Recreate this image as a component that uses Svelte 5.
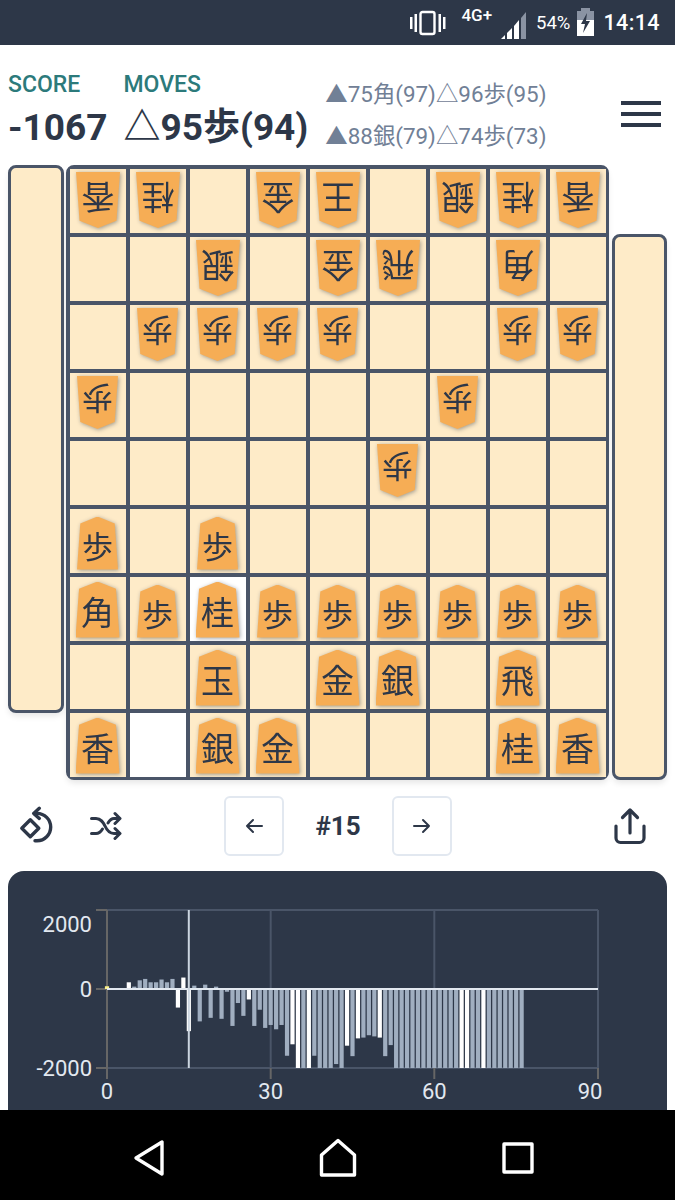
<script>
	const rows = [
		'香桂・金王・銀桂香',
		'・・銀・金飛・角・',
		'・歩歩歩歩・・歩歩',
		'歩・・・・・歩・・',
		'・・・・・歩・・・',
		'歩・歩・・・・・・',
		'角歩桂歩歩歩歩歩歩',
		'・・玉・金銀・飛・',
		'香・銀金・・・桂香'
	]
	// cells the last move came from
	const marked = ['6-2', '8-1']
	const board = rows.map((row) => row.split('').map((ch) => (ch === '・' ? '' : ch)))

	const scores = [
		70, 0, 25, 0, 170, 60, 220, 255, 170, 170, 240, 170, 255, -470, 290, -1067, 85, -820, 110, -730,
		60, -755, -70, -935, -355, -680, -265, -935, -525, -985, -911, -1020, -911, -1690, -1400, -2000,
		-2000, -2000, -1690, -2000, -2000, -2000, -1900, -2000, -1435, -1700, -1250, -1230, -1170, -1200,
		-1230, -1700, -1420, -2000, -2000, -2000, -2000, -2000, -2000, -2000, -2000, -2000, -2000, -2000,
		-2000, -2000, -2000, -2000, -2000, -2000, -2000, -2000, -2000, -2000, -2000, -2000, -2000
	]
	const whiteBars = [4, 13, 14, 15, 26, 34, 35, 37, 44, 46, 50, 65, 66, 69]

	const xAt = (i) => 107 + i * (491 / 90)
	const yAt = (v) => 989 - v * (79 / 2000)

	function barColor(i) {
		if (i === 0) return '#faf089'
		return whiteBars.includes(i) ? '#ffffff' : '#a0aec0'
	}
</script>

<div class="phone">
	<div class="status">
		<svg class="vibrate" viewBox="0 0 36 26" width="36" height="26">
			<rect x="10.5" y="2" width="14" height="22" rx="2" fill="none" stroke="#fff" stroke-width="2.4" />
			<rect x="0" y="7" width="2.5" height="12" fill="#fff" />
			<rect x="4.5" y="4" width="2.5" height="18" fill="#fff" />
			<rect x="28.5" y="4" width="2.5" height="18" fill="#fff" />
			<rect x="33" y="7" width="2.5" height="12" fill="#fff" />
		</svg>
		<span class="net">4G+</span>
		<svg class="signal" viewBox="0 0 25 27" width="25" height="27">
			<polygon points="0,27 4,23 4,27" fill="#fff" />
			<polygon points="6,21 11,16 11,27 6,27" fill="#fff" />
			<polygon points="13,14 18,8 18,27 13,27" fill="#fff" />
			<polygon points="20,6 25,0 25,27 20,27" fill="#8a93a3" />
		</svg>
		<span class="pct">54%</span>
		<svg class="battery" viewBox="0 0 17 28" width="17" height="28">
			<rect x="4" y="0" width="9" height="4" fill="#8a93a3" />
			<rect x="0" y="3" width="17" height="9" fill="#8a93a3" />
			<rect x="0" y="12" width="17" height="16" fill="#fff" />
			<polygon points="10,5 4,16 8,16 6,25 13,13 9,13" fill="#2d3748" />
		</svg>
		<span class="clock">14:14</span>
	</div>

	<main>
		<header>
			<div class="stat">
				<div class="label">SCORE</div>
				<div class="value">-1067</div>
			</div>
			<div class="stat moves">
				<div class="label">MOVES</div>
				<div class="value">△95歩(94)</div>
			</div>
			<div class="history">
				<div>▲75角(97)△96歩(95)</div>
				<div>▲88銀(79)△74歩(73)</div>
			</div>
			<div class="burger"><span></span><span></span><span></span></div>
		</header>

		<section class="table">
			<div class="stand left"></div>
			<div class="board">
				{#each board as row, r}
					{#each row as piece, c}
						<div class="cell" class:gote={r < 5} class:marked={marked.includes(r + '-' + c)}>
							{#if piece}
								<div class="shadow">
									<div class="piece" class:fu={piece === '歩'}>{piece}</div>
								</div>
							{/if}
						</div>
					{/each}
				{/each}
			</div>
			<div class="stand right"></div>
		</section>

		<section class="controls">
			<div class="tools">
				<svg class="rotate" viewBox="0 0 40 40" width="40" height="40" fill="none" stroke="#2d3748" stroke-width="3.4">
					<path d="M14.3 13.8 L22.8 22.3 L14.3 30.8 L5.8 22.3 Z" stroke-linejoin="round" />
					<path d="M19 7.4 H21 A13.7 13.7 0 0 1 21 34.8 H19" stroke-linecap="round" />
					<path d="M23.3 2.3 L17.7 7.4 L23.3 12.4" stroke-linecap="round" stroke-linejoin="round" />
				</svg>
				<svg class="shuffle" viewBox="0 0 32 30" width="32" height="30" fill="none" stroke="#2d3748" stroke-width="3" stroke-linecap="round" stroke-linejoin="round">
					<path d="M1.5 7.5 H6 C11 7.5 13 11 15 15 C17 19.5 19 22.5 24 22.5 H29" />
					<path d="M1.5 22.5 H6 C9 22.5 11 20.5 12.5 18" />
					<path d="M18 12 C19.5 9.5 21 7.5 24 7.5 H29" />
					<path d="M25 2.5 L30 7.5 L25 12.5" />
					<path d="M25 17.5 L30 22.5 L25 27.5" />
				</svg>
			</div>
			<div class="pager">
				<button aria-label="previous">
					<svg viewBox="0 0 24 24" width="24" height="24" fill="none" stroke="#2d3748" stroke-width="2" stroke-linecap="round" stroke-linejoin="round">
						<path d="M20 12 H5 M11 6 L5 12 L11 18" />
					</svg>
				</button>
				<span class="num">#15</span>
				<button aria-label="next">
					<svg viewBox="0 0 24 24" width="24" height="24" fill="none" stroke="#2d3748" stroke-width="2" stroke-linecap="round" stroke-linejoin="round">
						<path d="M4 12 H19 M13 6 L19 12 L13 18" />
					</svg>
				</button>
			</div>
			<svg class="share" viewBox="0 0 32 38" width="32" height="38" fill="none" stroke="#2d3748" stroke-width="3.2" stroke-linecap="round" stroke-linejoin="round">
				<path d="M16 26 V3 M8.5 10.5 L16 3 L23.5 10.5" />
				<path d="M2 19 V31 A4.5 4.5 0 0 0 6.5 35.5 H25.5 A4.5 4.5 0 0 0 30 31 V19" />
			</svg>
		</section>

		<section class="chart">
			<svg viewBox="8 871 659 239" width="659" height="239">
				<g stroke="#4a5568" stroke-width="2">
					<line x1="96" y1="910" x2="598" y2="910" />
					<line x1="96" y1="1068" x2="598" y2="1068" />
					<line x1="270.7" y1="910" x2="270.7" y2="1068" />
					<line x1="434.3" y1="910" x2="434.3" y2="1068" />
					<line x1="598" y1="910" x2="598" y2="1068" />
				</g>
				<g stroke="#666666" stroke-width="2">
					<line x1="107" y1="910" x2="107" y2="1079" />
					<line x1="96" y1="910" x2="107" y2="910" />
					<line x1="96" y1="989" x2="107" y2="989" />
					<line x1="96" y1="1068" x2="107" y2="1068" />
					<line x1="270.7" y1="1068" x2="270.7" y2="1079" />
					<line x1="434.3" y1="1068" x2="434.3" y2="1079" />
					<line x1="598" y1="1068" x2="598" y2="1079" />
				</g>
				{#each scores as s, i}
					<rect
						x={xAt(i) - 2.1}
						y={Math.min(yAt(s), 989)}
						width="4.2"
						height={Math.abs(yAt(s) - 989)}
						fill={barColor(i)}
					/>
				{/each}
				<line x1="107" y1="989" x2="598" y2="989" stroke="#e2e8f0" stroke-width="2" />
				<line x1="188.8" y1="910" x2="188.8" y2="1068" stroke="#cbd5e0" stroke-width="2" />
				<g class="ticks">
					<text x="92" y="932" text-anchor="end">2000</text>
					<text x="92" y="997" text-anchor="end">0</text>
					<text x="92" y="1076" text-anchor="end">-2000</text>
					<text x="107" y="1099" text-anchor="middle">0</text>
					<text x="270.7" y="1099" text-anchor="middle">30</text>
					<text x="434.3" y="1099" text-anchor="middle">60</text>
					<text x="590" y="1099" text-anchor="middle">90</text>
				</g>
			</svg>
		</section>
	</main>

	<nav>
		<svg viewBox="0 0 32 38" width="32" height="38" fill="none" stroke="#fff" stroke-width="3.4" stroke-linejoin="round">
			<path d="M29 3 V35 L3 19 Z" />
		</svg>
		<svg class="home" viewBox="0 0 38 40" width="38" height="40" fill="none" stroke="#fff" stroke-width="3.4" stroke-linejoin="round">
			<path d="M19 2.5 L35.5 17 V37 H2.5 V17 Z" />
		</svg>
		<svg viewBox="0 0 32 32" width="32" height="32" fill="none" stroke="#fff" stroke-width="3.4" stroke-linejoin="round">
			<rect x="2" y="2" width="28" height="28" />
		</svg>
	</nav>
</div>

<style>
	:global(body) {
		margin: 0;
		background: #fff;
	}

	.phone {
		display: flex;
		flex-direction: column;
		width: 675px;
		height: 1200px;
		overflow: hidden;
		font-family: Roboto, 'Noto Sans CJK JP', sans-serif;
		color: #2d3748;
	}

	.status {
		display: flex;
		flex: none;
		align-items: center;
		justify-content: flex-end;
		height: 45px;
		padding-right: 15px;
		background: #2d3748;
		color: #fff;
	}

	.vibrate {
		margin-top: 1px;
	}

	.net {
		align-self: flex-start;
		margin: 5px 0 0 15px;
		font-size: 17px;
		font-weight: 500;
	}

	.signal {
		margin: 6px 0 0 9px;
	}

	.pct {
		margin-left: 10px;
		font-size: 18.5px;
	}

	.battery {
		margin: -1px 0 0 7px;
	}

	.clock {
		margin-left: 9px;
		font-size: 21.5px;
		font-weight: 500;
		letter-spacing: 0.4px;
	}

	main {
		flex: 1;
		min-height: 0;
		overflow: hidden;
	}

	header {
		display: flex;
		height: 120px;
		padding: 0 14px 0 8px;
		box-sizing: border-box;
	}

	.stat {
		padding-top: 27px;
	}

	.moves {
		margin-left: 16px;
	}

	.label {
		color: #2c7a7b;
		font-size: 23px;
		font-weight: 500;
		line-height: 26px;
	}

	.value {
		margin-top: 8px;
		font-size: 37px;
		font-weight: 700;
		line-height: 44px;
		white-space: nowrap;
	}

	.history {
		display: flex;
		flex-direction: column;
		gap: 16px;
		margin-left: 17px;
		padding-top: 36px;
		color: #718096;
		font-size: 22.4px;
		line-height: 26px;
		white-space: nowrap;
	}

	.burger {
		display: flex;
		flex-direction: column;
		gap: 7px;
		margin-left: auto;
		padding-top: 56px;
	}

	.burger span {
		width: 40px;
		height: 4px;
		background: #2d3748;
	}

	.table {
		display: flex;
		height: 615px;
		padding-left: 8px;
	}

	.stand,
	.board {
		border: 3px solid #4a5568;
		border-radius: 8px;
		box-sizing: border-box;
		box-shadow: 0 4px 6px -1px rgba(0, 0, 0, 0.1);
	}

	.stand {
		background: #feebc8;
	}

	.left {
		width: 56px;
		height: 548px;
		margin-right: 2px;
	}

	.right {
		align-self: flex-end;
		width: 55px;
		height: 546px;
		margin-left: 3px;
	}

	.board {
		display: grid;
		grid-template-columns: repeat(9, 56px);
		grid-template-rows: repeat(9, 64px);
		gap: 4px;
		justify-content: center;
		align-content: center;
		width: 543px;
		background: #4a5568;
	}

	.cell {
		display: flex;
		align-items: flex-end;
		justify-content: center;
		padding-bottom: 3px;
		box-sizing: border-box;
		background: #feebc8;
	}

	.cell.gote {
		align-items: flex-start;
		padding: 3px 0 0;
	}

	.cell.marked {
		background: #fff;
	}

	.shadow {
		filter: drop-shadow(1px 1px 2px rgba(45, 55, 72, 0.45));
	}

	.piece {
		display: flex;
		align-items: center;
		justify-content: center;
		width: 44px;
		height: 56px;
		padding-top: 3px;
		box-sizing: border-box;
		background: #f6ad55;
		clip-path: polygon(50% 0, 92% 13%, 100% 100%, 0 100%, 8% 13%);
		font-family: 'Noto Sans CJK JP', sans-serif;
		font-size: 33px;
		line-height: 1;
		color: #2d3748;
	}

	.piece.fu {
		width: 41px;
		height: 53px;
		font-size: 31px;
	}

	.gote .piece {
		transform: rotate(180deg);
	}

	.controls {
		display: flex;
		align-items: center;
		height: 91px;
		padding: 0 29px 0 16px;
		box-sizing: border-box;
	}

	.tools {
		display: flex;
		align-items: center;
		gap: 34px;
		width: 208px;
	}

	.pager {
		display: flex;
		align-items: center;
	}

	.pager button {
		display: flex;
		align-items: center;
		justify-content: center;
		width: 60px;
		height: 60px;
		padding: 0;
		border: 2px solid #e2e8f0;
		border-radius: 6px;
		background: #fff;
	}

	.num {
		width: 108px;
		font-size: 26px;
		font-weight: 700;
		text-align: center;
	}

	.share {
		margin-left: auto;
	}

	.chart {
		width: 659px;
		height: 300px;
		margin-left: 8px;
		border-radius: 16px;
		background: #2d3748;
	}

	.chart svg {
		display: block;
	}

	.ticks text {
		fill: #e2e8f0;
		font-family: Roboto, sans-serif;
		font-size: 22px;
	}

	nav {
		display: flex;
		flex: none;
		align-items: center;
		justify-content: space-between;
		height: 90px;
		padding: 6px 141px 0 133px;
		box-sizing: border-box;
		background: #000;
	}

	.home {
		margin-left: 9px;
	}
</style>
